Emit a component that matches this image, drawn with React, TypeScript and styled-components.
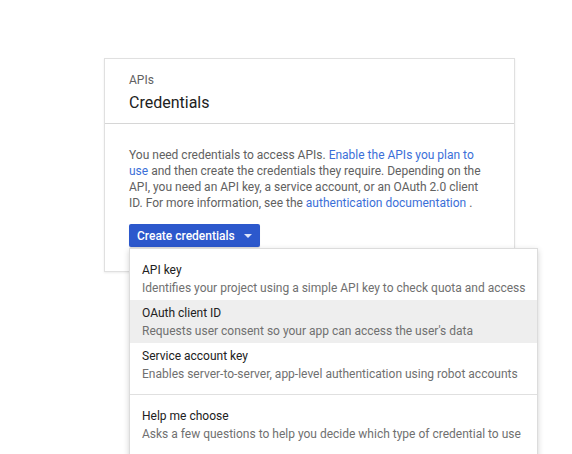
import React from "react";
import styled, { createGlobalStyle } from "styled-components";

const Global = createGlobalStyle`
  html, body { margin: 0; padding: 0; background: #fff; }
  body { font-family: Roboto, "Liberation Sans", Arial, sans-serif; -webkit-font-smoothing: antialiased; }
  * { box-sizing: border-box; }
`;

const Page = styled.div`
  width: 572px;
  height: 454px;
  overflow: hidden;
  padding: 58px 0 0 104px;
`;

const Card = styled.section`
  position: relative;
  width: 411px;
  background: #fff;
  border: 1px solid #e0e0e0;
  box-shadow: 0 1px 2px rgba(0, 0, 0, 0.08);
`;

const Header = styled.header`
  height: 65px;
  padding: 13px 24px 0;
  border-bottom: 1px solid #d6d6d6;
`;

const Eyebrow = styled.div`
  font-size: 12px;
  line-height: 16px;
  color: #616161;
`;

const Title = styled.h1`
  margin: 4px 0 0;
  font-size: 16px;
  line-height: 22px;
  font-weight: 400;
  color: #212121;
`;

const Body = styled.div`
  padding: 23px 24px 24px;
`;

const Text = styled.p`
  margin: 0;
  font-size: 12px;
  line-height: 16px;
  color: #616161;
`;

const Link = styled.a`
  color: #3b6fd8;
  text-decoration: none;
`;

const DropWrap = styled.div`
  position: relative;
  margin-top: 13px;
`;

const Button = styled.button`
  display: inline-flex;
  align-items: center;
  gap: 9px;
  height: 23px;
  padding: 0 8px 0 8px;
  border: none;
  border-radius: 2px;
  background: #2c58cc;
  color: #fff;
  font-family: inherit;
  font-size: 12px;
  font-weight: 500;
  box-shadow: 0 1px 1px rgba(0, 0, 0, 0.15);
`;

const Caret = styled.span`
  width: 0;
  height: 0;
  border-left: 4px solid transparent;
  border-right: 4px solid transparent;
  border-top: 4px solid #dfe6fa;
  margin-top: 1px;
`;

const Menu = styled.ul`
  position: absolute;
  left: 0;
  top: 24px;
  width: 409px;
  margin: 0;
  padding: 8px 0 20px;
  list-style: none;
  background: #fff;
  border: 1px solid #dcdcdc;
  box-shadow: 0 2px 6px rgba(0, 0, 0, 0.18);
  z-index: 2;
`;

const Item = styled.li<{ $active?: boolean }>`
  padding: 5px 12px;
  height: 43px;
  background: ${(p) => (p.$active ? "#eeeeee" : "transparent")};
`;

const ItemTitle = styled.div`
  font-size: 12px;
  line-height: 16px;
  color: #212121;
`;

const ItemDesc = styled.div`
  margin-top: 2px;
  font-size: 12px;
  line-height: 16px;
  color: #707070;
  white-space: nowrap;
`;

const Divider = styled.li`
  height: 1px;
  margin: 8px 0 8px;
  background: #e0e0e0;
`;

const items = [
  { t: "API key", d: "Identifies your project using a simple API key to check quota and access" },
  { t: "OAuth client ID", d: "Requests user consent so your app can access the user's data", active: true },
  { t: "Service account key", d: "Enables server-to-server, app-level authentication using robot accounts" },
];

export default function App() {
  return (
    <>
      <Global />
      <Page>
        <Card>
          <Header>
            <Eyebrow>APIs</Eyebrow>
            <Title>Credentials</Title>
          </Header>
          <Body>
            <Text>
              You need credentials to access APIs. <Link href="#">Enable the APIs you plan to use</Link> and then
              create the credentials they require. Depending on the API, you need an API key, a service account, or
              an OAuth 2.0 client ID. For more information, see the <Link href="#">authentication documentation</Link> .
            </Text>
            <DropWrap>
              <Button>
                Create credentials
                <Caret />
              </Button>
              <Menu>
                {items.map((it) => (
                  <Item key={it.t} $active={it.active}>
                    <ItemTitle>{it.t}</ItemTitle>
                    <ItemDesc>{it.d}</ItemDesc>
                  </Item>
                ))}
                <Divider />
                <Item>
                  <ItemTitle>Help me choose</ItemTitle>
                  <ItemDesc>Asks a few questions to help you decide which type of credential to use</ItemDesc>
                </Item>
              </Menu>
            </DropWrap>
          </Body>
        </Card>
      </Page>
    </>
  );
}
